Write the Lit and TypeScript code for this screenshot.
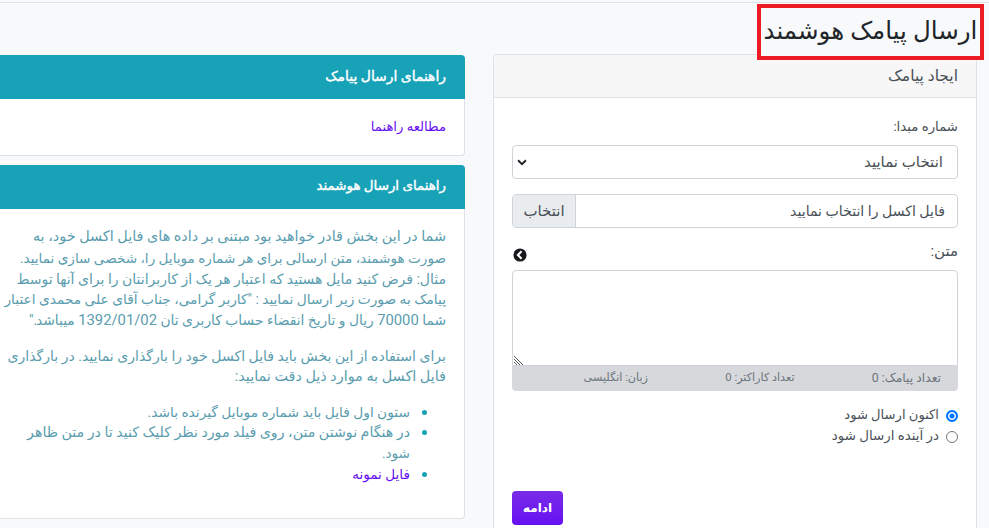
import { LitElement, html, css } from "lit";
import { customElement } from "lit/decorators.js";

@customElement("app-root")
export class AppRoot extends LitElement {
  static styles = css`
    :host {
      display: block;
      position: relative;
      width: 989px;
      height: 528px;
      overflow: hidden;
      background: #f8f9fa;
      font-family: Roboto, "DejaVu Sans", sans-serif;
      font-size: 13.6px;
      line-height: 20.8px;
      color: #495057;
      direction: rtl;
    }
    .page {
      border-top: 1px solid #dee2e6;
      margin-top: 2px;
      padding-right: 12px;
    }
    .title-box {
      position: absolute;
      top: 4px;
      left: 757px;
      width: 219px;
      height: 45px;
      padding-bottom: 3px;
      border: 4px solid #ed1c24;
      background: #f8f9fa;
      z-index: 2;
      display: flex;
      align-items: center;
      justify-content: center;
    }
    h1 {
      margin: 0;
      font-size: 24.5px;
      line-height: 1.2;
      font-weight: 400;
      color: #212529;
      white-space: nowrap;
    }
    .columns {
      display: flex;
      gap: 28px;
      padding-top: 51px;
      align-items: flex-start;
    }
    .card {
      background: #fff;
      border: 1px solid #dee2e6;
      border-radius: 4px;
      flex: none;
    }
    .main {
      width: 484px;
      height: 500px;
      box-sizing: border-box;
    }
    .main-head {
      height: 43px;
      box-sizing: border-box;
      padding: 11px 18px 0;
      background: #f7f7f7;
      border-bottom: 1px solid #dee2e6;
      border-radius: 4px 4px 0 0;
      color: #495057;
      font-size: 15.5px;
    }
    .main-body {
      padding: 19px 18px 0;
    }
    label.lbl { display: block; height: 28px; font-size: 13.3px; }
    .select, .file {
      display: flex;
      height: 34px;
      box-sizing: border-box;
      border: 1px solid #ced4da;
      border-radius: 4px;
      background: #fff;
      align-items: center;
    }
    .select {
      justify-content: space-between;
      padding: 0 14px 0 2px;
      margin-bottom: 15px;
      font-size: 15px;
    }
    .select svg { width: 14px; height: 14px; }
    .file {
      margin-bottom: 13px;
      overflow: hidden;
      font-size: 14.1px;
    }
    .file .name { flex: 1; padding: 0 12px; }
    .file .btn {
      width: 62px;
      height: 100%;
      background: #e9ecef;
      border-right: 1px solid #ced4da;
      display: flex;
      align-items: center;
      justify-content: center;
      font-size: 15px;
    }
    .text-row {
      display: flex;
      justify-content: space-between;
      align-items: flex-start;
      height: 29px;
      font-size: 15px;
    }
    .back { width: 14px; height: 14px; margin: 7px 0 0 1px; }
    .area {
      position: relative;
      height: 96px;
      box-sizing: border-box;
      border: 1px solid #ced4da;
      border-radius: 4px 4px 0 0;
      background: #fff;
    }
    .grip { position: absolute; left: 1px; bottom: 0; width: 10px; height: 10px; }
    .stats {
      display: grid;
      grid-template-columns: repeat(3, 146.5px);
      height: 25px;
      align-items: center;
      background: #d6d8db;
      color: #6c757d;
      font-size: 11.2px;
      border-radius: 0 0 4px 4px;
      padding-right: 17px;
      margin-bottom: 14px;
    }
    .stats span:first-child { font-size: 12.3px; }
    .radio {
      display: flex;
      align-items: center;
      gap: 7px;
      height: 21px;
      font-size: 13.1px;
    }
    .radio.later { font-size: 13.4px; }
    .radio i {
      width: 12px;
      height: 12px;
      border-radius: 50%;
      border: 1px solid #767676;
      background: #fff;
      flex: none;
      box-sizing: border-box;
    }
    .radio i.on {
      border: 2px solid #0075ff;
      background: #0075ff;
      box-shadow: inset 0 0 0 1.5px #fff;
    }
    .go {
      display: block;
      margin-top: 44px;
      margin-right: auto;
      width: 51px;
      height: 34px;
      border: 0;
      padding: 0;
      border-radius: 4px;
      background: linear-gradient(#7a2be8, #6610f2);
      color: #fff;
      font: 700 12px "DejaVu Sans", sans-serif;
    }
    .side {
      flex: none;
      width: 490px;
      display: flex;
      flex-direction: column;
      gap: 9px;
      margin-top: 1px;
    }
    .side .card { border-radius: 0 4px 4px 0; border-left: 0; border-top: 0; }
    .side-head {
      height: 44px;
      box-sizing: border-box;
      margin-right: -1px;
      background: #17a2b8;
      color: #fff;
      font-size: 13.9px;
      font-weight: 400;
      -webkit-text-stroke: 0.4px #fff;
      padding: 11px 19px 0 18px;
      border-radius: 0 4px 0 0;
    }
    .side-head.narrow { font-size: 13.4px; }
    .side-body.link-body { height: 56px; box-sizing: border-box; padding: 18px; font-size: 13.2px; }
    a { color: #6610f2; text-decoration: none; }
    .info { color: #5a9dae; height: 309px; box-sizing: border-box; padding: 18px; white-space: nowrap; }
    .info p { margin: 0 0 15px; }
    .info p + p { margin-bottom: 14px; }
    .info ul { margin: 0; padding: 0 36px 0 0; list-style: none; }
    .info li { position: relative; }
    .info li::before {
      content: "";
      position: absolute;
      top: 8px;
      right: -17px;
      width: 5px;
      height: 5px;
      border-radius: 50%;
      background: #17a2b8;
    }
    .ln { display: block; height: 20.8px; }
    .s136 { font-size: 13.6px; }
    .s1375 { font-size: 13.75px; }
    .s1385 { font-size: 13.85px; }
    .s140 { font-size: 14px; }
    .s1405 { font-size: 14.05px; }
    .s142 { font-size: 14.2px; }
    .s144 { font-size: 14.4px; }
    .num { font-size: 14.8px; }
  `;

  render() {
    return html`
      <div class="title-box"><h1>ارسال پیامک هوشمند</h1></div>
      <div class="page">
        <div class="columns">
          <section class="card main">
            <div class="main-head">ایجاد پیامک</div>
            <div class="main-body">
              <label class="lbl">شماره مبدا:</label>
              <div class="select">
                <span>انتخاب نمایید</span>
                <svg viewBox="0 0 16 16"><path d="M3.5 6l4.5 4.5L12.5 6" fill="none" stroke="#212529" stroke-width="2.2"/></svg>
              </div>
              <div class="file">
                <div class="name">فایل اکسل را انتخاب نمایید</div>
                <div class="btn">انتخاب</div>
              </div>
              <div class="text-row">
                <span>متن:</span>
                <svg class="back" viewBox="0 0 16 16"><circle cx="8" cy="8" r="7.5" fill="#16181b"/><path d="M9.8 3.8L5.6 8l4.2 4.2" fill="none" stroke="#fff" stroke-width="2.4"/></svg>
              </div>
              <div class="area">
                <svg class="grip" viewBox="0 0 10 10"><path d="M0 1l9 9M0 4l6 6M0 7l3 3" stroke="#555" stroke-width="1"/></svg>
              </div>
              <div class="stats">
                <span>تعداد پیامک: 0</span>
                <span>تعداد کاراکتر: 0</span>
                <span>زبان: انگلیسی</span>
              </div>
              <div class="radio"><i class="on"></i><span>اکنون ارسال شود</span></div>
              <div class="radio later"><i></i><span>در آینده ارسال شود</span></div>
              <button class="go">ادامه</button>
            </div>
          </section>
          <div class="side">
            <section class="card">
              <div class="side-head">راهنمای ارسال پیامک</div>
              <div class="side-body link-body"><a>مطالعه راهنما</a></div>
            </section>
            <section class="card">
              <div class="side-head narrow">راهنمای ارسال هوشمند</div>
              <div class="side-body info">
                <p>
                  <span class="ln s144">شما در این بخش قادر خواهید بود مبتنی بر داده های فایل اکسل خود، به</span>
                  <span class="ln s136">صورت هوشمند، متن ارسالی برای هر شماره موبایل را، شخصی سازی نمایید.</span>
                  <span class="ln s140">مثال: فرض کنید مایل هستید که اعتبار هر یک از کاربرانتان را برای آنها توسط</span>
                  <span class="ln s1375">پیامک به صورت زیر ارسال نمایید : "کاربر گرامی، جناب آقای علی محمدی اعتبار</span>
                  <span class="ln s1385">شما <span class="num">70000</span> ریال و تاریخ انقضاء حساب کاربری تان <span class="num">1392/01/02</span> میباشد."</span>
                </p>
                <p>
                  <span class="ln s1405">برای استفاده از این بخش باید فایل اکسل خود را بارگذاری نمایید. در بارگذاری</span>
                  <span class="ln s144">فایل اکسل به موارد ذیل دقت نمایید:</span>
                </p>
                <ul>
                  <li><span class="ln s1375">ستون اول فایل باید شماره موبایل گیرنده باشد.</span></li>
                  <li>
                    <span class="ln s142">در هنگام نوشتن متن، روی فیلد مورد نظر کلیک کنید تا در متن ظاهر</span>
                    <span class="ln s136">شود.</span>
                  </li>
                  <li><a class="ln s136">فایل نمونه</a></li>
                </ul>
              </div>
            </section>
          </div>
        </div>
      </div>
    `;
  }
}
